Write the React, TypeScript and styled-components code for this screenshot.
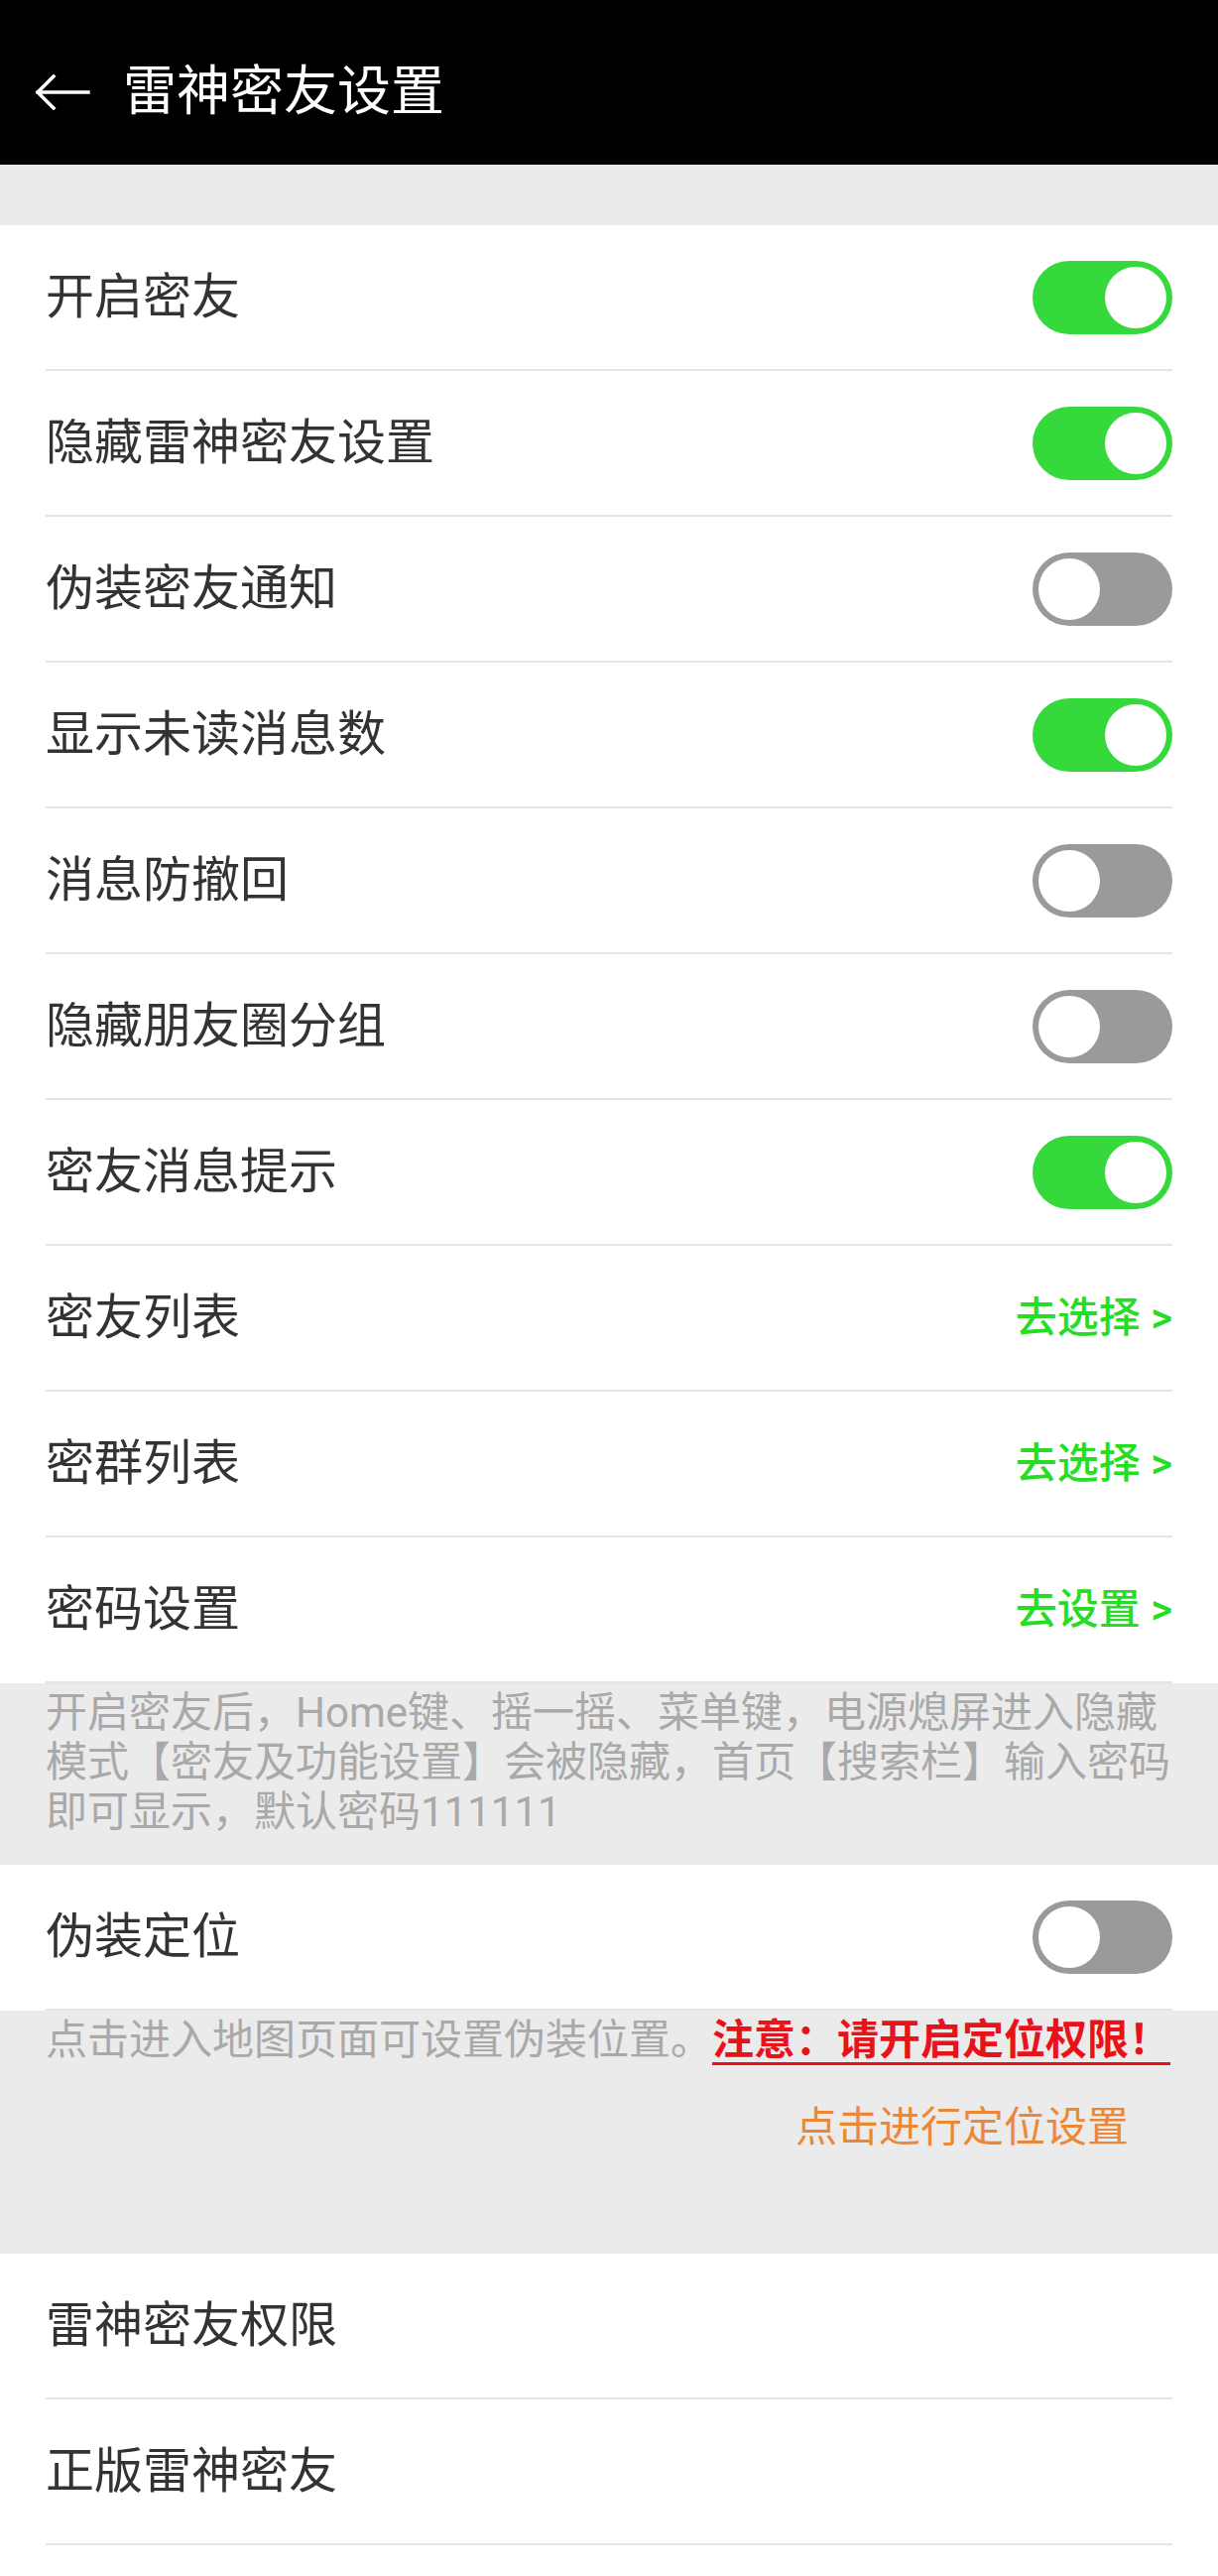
import React from 'react';
import styled, { createGlobalStyle } from 'styled-components';

const GlobalStyle = createGlobalStyle`
  html, body {
    margin: 0;
    padding: 0;
    background: #ffffff;
  }
  body {
    font-family: Roboto, "Noto Sans CJK SC", sans-serif;
  }
  * {
    box-sizing: border-box;
  }
`;

const Page = styled.div`
  width: 1228px;
  min-height: 2597px;
  background: #ffffff;
`;

const Header = styled.header`
  height: 166px;
  background: #000000;
  display: flex;
  align-items: center;
  padding: 20px 0 0 35px;
  gap: 33px;
`;

const Title = styled.h1`
  margin: 0;
  font-size: 54px;
  font-weight: 400;
  color: #ffffff;
  line-height: 1;
`;

const Spacer = styled.div`
  height: 61px;
  background: #ebebeb;
`;

const Section = styled.section`
  background: #ffffff;
`;

const Row = styled.div`
  height: 147px;
  margin: 0 46px;
  border-bottom: 2px solid #e5e5e5;
  display: flex;
  align-items: center;
  justify-content: space-between;
`;

const Label = styled.span`
  font-size: 49px;
  color: #333333;
  line-height: 1;
`;

const Track = styled.div<{ $on: boolean }>`
  width: 141px;
  height: 74px;
  border-radius: 37px;
  padding: 6px;
  background: ${({ $on }) => ($on ? '#36d93b' : '#9a9a9a')};
  display: flex;
  justify-content: ${({ $on }) => ($on ? 'flex-end' : 'flex-start')};
`;

const Knob = styled.div`
  width: 62px;
  height: 62px;
  border-radius: 50%;
  background: #ffffff;
`;

const Link = styled.span`
  font-size: 42px;
  font-weight: 500;
  color: #25dd25;
  line-height: 1;
`;

const Note = styled.div`
  background: #ebebeb;
  padding: 5px 46px 28px;
  font-size: 42px;
  line-height: 50px;
  color: #a9a9a9;
`;

const Line = styled.span`
  display: block;
  white-space: nowrap;
`;

const LocationBox = styled.div`
  background: #ebebeb;
  padding: 5px 46px 102px;
  font-size: 42px;
  line-height: 50px;
  color: #a9a9a9;
  display: flex;
  flex-direction: column;
`;

const Warning = styled.span`
  color: #e8121b;
  font-weight: 700;
  text-decoration: underline;
  text-decoration-thickness: 3px;
  text-underline-offset: 8px;
`;

const LocateButton = styled.span`
  align-self: flex-end;
  margin-top: 38px;
  margin-right: 44px;
  color: #ea8838;
`;

const BackArrow = () => (
  <svg width="56" height="36" viewBox="0 0 56 36" fill="none">
    <path
      d="M54 18H3M19 2L3 18L19 34"
      stroke="#ffffff"
      strokeWidth="3.5"
      strokeLinecap="square"
    />
  </svg>
);

const Toggle = ({ on }: { on: boolean }) => (
  <Track $on={on}>
    <Knob />
  </Track>
);

type Item = { label: string; toggle?: boolean; link?: string };

const items: Item[] = [
  { label: '开启密友', toggle: true },
  { label: '隐藏雷神密友设置', toggle: true },
  { label: '伪装密友通知', toggle: false },
  { label: '显示未读消息数', toggle: true },
  { label: '消息防撤回', toggle: false },
  { label: '隐藏朋友圈分组', toggle: false },
  { label: '密友消息提示', toggle: true },
  { label: '密友列表', link: '去选择 >' },
  { label: '密群列表', link: '去选择 >' },
  { label: '密码设置', link: '去设置 >' },
];

const SettingRow = ({ label, toggle, link }: Item) => (
  <Row>
    <Label>{label}</Label>
    {link ? <Link>{link}</Link> : toggle !== undefined && <Toggle on={toggle} />}
  </Row>
);

export default function App() {
  return (
    <Page>
      <GlobalStyle />
      <Header>
        <BackArrow />
        <Title>雷神密友设置</Title>
      </Header>
      <Spacer />
      <Section>
        {items.map((item) => (
          <SettingRow key={item.label} {...item} />
        ))}
      </Section>
      <Note>
        <Line>开启密友后，Home键、摇一摇、菜单键，电源熄屏进入隐藏</Line>
        <Line>模式【密友及功能设置】会被隐藏，首页【搜索栏】输入密码</Line>
        <Line>即可显示，默认密码111111</Line>
      </Note>
      <Section>
        <SettingRow label="伪装定位" toggle={false} />
      </Section>
      <LocationBox>
        <Line>
          点击进入地图页面可设置伪装位置。<Warning>注意：请开启定位权限！</Warning>
        </Line>
        <LocateButton>点击进行定位设置</LocateButton>
      </LocationBox>
      <Section>
        <SettingRow label="雷神密友权限" />
        <SettingRow label="正版雷神密友" />
      </Section>
    </Page>
  );
}
